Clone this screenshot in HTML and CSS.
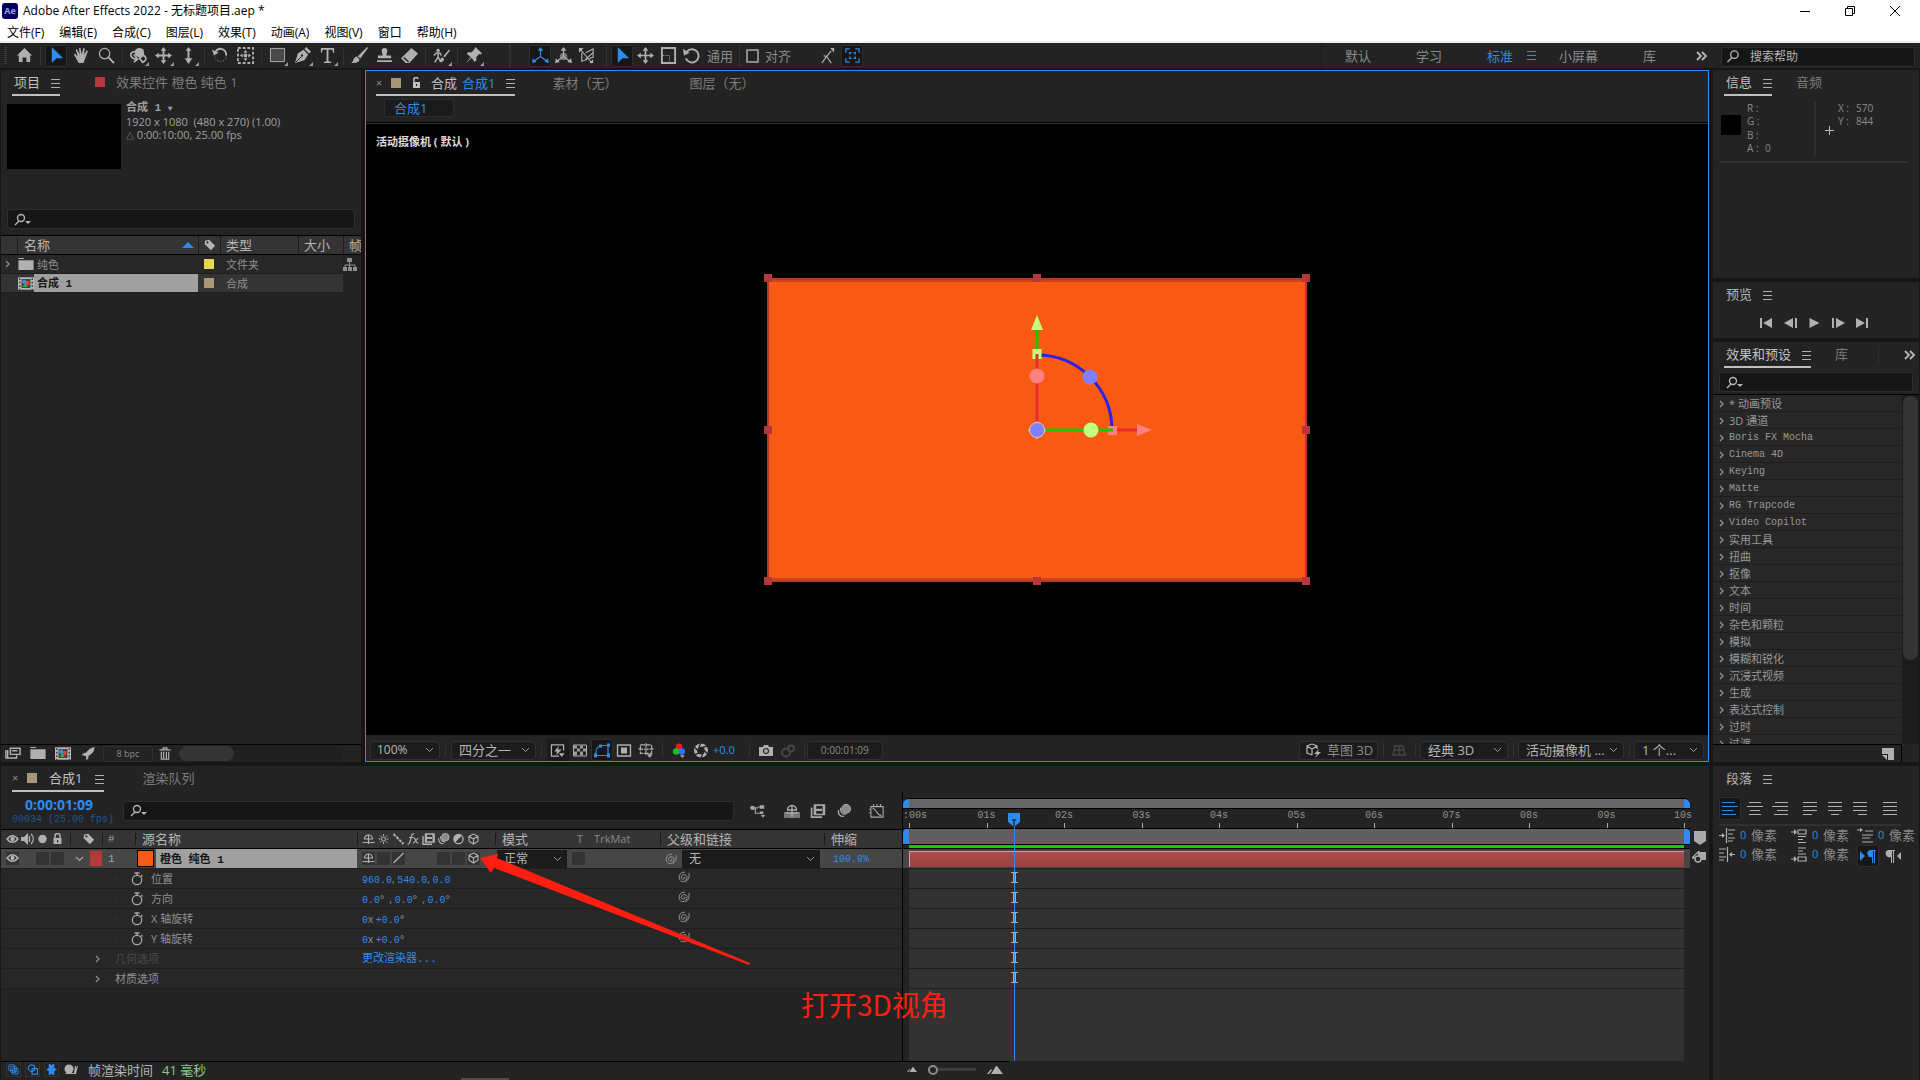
FILE: index.html
```html
<!DOCTYPE html>
<html lang="zh-CN">
<head>
    <meta charset="UTF-8">
    <meta name="viewport" content="width=device-width, initial-scale=1.0">
    <title>Adobe After Effects 2022 - 无标题项目.aep *</title>
    <link rel="stylesheet" href="styles.css">
</head>
<body>
    <!-- Icon definitions -->
    <svg class="defs" aria-hidden="true">
        <symbol id="i-home" viewBox="0 0 18 18"><path fill="currentColor" d="M9 1L1 9h2v7h4v-5h4v5h4V9h2z"/></symbol>
        <symbol id="i-cursor" viewBox="0 0 18 18"><path fill="currentColor" d="M4 0v17l5-5h7z"/></symbol>
        <symbol id="i-hand" viewBox="0 0 18 18"><path fill="currentColor" d="M6 17L1 8l1-1 3 3-2-7 1-1 3 6-.500-7h1.500l1 7 2-7 1.500.500-1 7 3-5 1.300.700L13 12l-2 5z"/></symbol>
        <symbol id="i-zoom" viewBox="0 0 18 18"><g fill="none" stroke="currentColor"><circle cx="7" cy="7" r="5.500" stroke-width="1.300"/><path d="M11 11l6 6" stroke-width="2"/></g></symbol>
        <symbol id="i-orbit" viewBox="0 0 18 18"><circle cx="10" cy="6" r="5" fill="currentColor"/><path d="M7 13C-1 12-1 5 5 5M9 9c9-2 10 6 4 7M4 8l4 5-4 3M15 8l-5 4 4 5" fill="none" stroke="currentColor" stroke-width="1.800"/></symbol>
        <symbol id="i-pan" viewBox="0 0 18 18"><path fill="currentColor" d="M9 0l3 4h-2v4h4V6l4 3-4 3v-2h-4v4h2l-3 4-3-4h2v-4H4v2L0 9l4-3v2h4V4H6z"/></symbol>
        <symbol id="i-move" viewBox="0 0 18 18"><path d="M9 2v14M2 9h14" stroke="currentColor" stroke-width="1.800"/><path fill="currentColor" d="M9 0l3 4H6zM9 18l3-4H6zM0 9l4-3v6zM18 9l-4-3v6z"/></symbol>
        <symbol id="i-dolly" viewBox="0 0 18 18"><path fill="currentColor" d="M9 0l3 4h-2v8h3l-4 6-4-6h3V4H6z"/></symbol>
        <symbol id="i-rotate" viewBox="0 0 18 18"><path d="M3 7a6 6 0 0 1 12 2" fill="none" stroke="currentColor" stroke-width="2"/><path fill="currentColor" d="M0 3l2 6 5-3z"/><path d="M15 9a6 6 0 0 1-12 1" fill="none" stroke="currentColor" stroke-dasharray="1 2"/></symbol>
        <symbol id="i-anchor" viewBox="0 0 18 18"><rect x="1" y="1" width="16" height="16" fill="none" stroke="currentColor" stroke-width="2" stroke-dasharray="3 2"/><path fill="currentColor" d="M9 3l2 3H7zM9 15l2-3H7zM3 9l3-2v4zM15 9l-3-2v4z"/><circle cx="9" cy="9" r="2" fill="currentColor"/></symbol>
        <symbol id="i-rect" viewBox="0 0 18 18"><path d="M1.500 1.500h15v14h-15z" fill="#4a4a4a" stroke="currentColor"/></symbol>
        <symbol id="i-pen" viewBox="0 0 18 18"><path fill="currentColor" d="M1 17L4 7l6-4 5 5-4 6zM11 2l2-2 5 5-2 2z"/><path d="M2 16l6-6" stroke="#232323"/><circle cx="8.500" cy="9" r="1.200" fill="#232323"/></symbol>
        <symbol id="i-type" viewBox="0 0 18 18"><path fill="currentColor" d="M2 1h14v5h-1l-1-3h-4v12l3 1v1H5v-1l3-1V3H4L3 6H2z"/></symbol>
        <symbol id="i-brush" viewBox="0 0 18 18"><path fill="currentColor" d="M17 0l1 1-8 11-3-2zM6 10l3 3c0 4-5 4-9 4 3-1 2-6 6-7z"/></symbol>
        <symbol id="i-stamp" viewBox="0 0 18 18"><path fill="currentColor" d="M6 4a3 3 0 1 1 6 0c0 2-1 3-1 5h5v3H2V9h5c0-2-1-3-1-5zM1 14h16v2H1z"/></symbol>
        <symbol id="i-eraser" viewBox="0 0 18 18"><path fill="currentColor" d="M11 1l7 6-9 10H5l-5-5z"/><path d="M3 11l5 5" stroke="#232323" stroke-width="1.500"/></symbol>
        <symbol id="i-roto" viewBox="0 0 20 18"><circle cx="6" cy="3" r="2" fill="currentColor"/><path d="M1 9l3-3h4l2 3M6 6v5l-4 6M6 11l3 5" stroke="currentColor" stroke-width="1.800" fill="none"/><path fill="currentColor" d="M19 2l1 1-6 8-2-1zM11 11l2 2c0 3-3 4-6 4 2-1 1-5 4-6z"/></symbol>
        <symbol id="i-pin" viewBox="0 0 18 18"><path fill="currentColor" d="M11 0l7 7-2 1-1-.500-3 3 0 4-2 1-3-4-6 6 5-7-4-3 1-2h4l3-3V2z"/></symbol>
        <symbol id="i-axis" viewBox="0 0 18 18"><path d="M9 3v7l-7 5M9 10l7 5" fill="none" stroke="currentColor" stroke-width="1.300"/><path fill="currentColor" d="M9 0l3 4H6zM0 17l1-5 4 4zM18 17l-1-5-4 4z"/></symbol>
        <symbol id="i-world" viewBox="0 0 18 18"><circle cx="9" cy="10" r="4" fill="#777"/><path d="M9 3v7l-7 5M9 10l7 5" fill="none" stroke="currentColor" stroke-width="1.300"/><path fill="currentColor" d="M9 0l3 4H6zM0 17l1-5 4 4zM18 17l-1-5-4 4z"/></symbol>
        <symbol id="i-view" viewBox="0 0 18 18"><path d="M4 6v9l6-2M8 6l8-4v9l-4 1M2 2l6 7 7 8M8 13l8-7" fill="none" stroke="currentColor" stroke-width="1.200"/><path fill="currentColor" d="M1 1h5L1 6zM16 17h-4l4-4z"/></symbol>
        <symbol id="i-scale" viewBox="0 0 18 18"><path d="M2 1h14v16H2z" fill="none" stroke="currentColor" stroke-width="2"/><path d="M3 9h7v7" fill="none" stroke="currentColor" stroke-dasharray="1 1"/></symbol>
        <symbol id="i-undo" viewBox="0 0 18 18"><path d="M4 5a7 7 0 1 1-1 7" fill="none" stroke="currentColor" stroke-width="2"/><path fill="currentColor" d="M0 2l1 7 6-3z"/></symbol>
        <symbol id="i-snap" viewBox="0 0 18 18"><path d="M3 17l5-7 5 7M8 10l5-6M5 9l4 2" fill="none" stroke="currentColor" stroke-width="1.300"/><path fill="currentColor" d="M12 1h4v5z"/></symbol>
        <symbol id="i-brackets" viewBox="0 0 18 18"><path d="M2 6V2h4M12 2h4v4M16 12v4h-4M6 16H2v-4M6 8V6h2M10 6h2v2M12 10v2h-2M8 12H6v-2" fill="none" stroke="currentColor" stroke-width="1.300"/></symbol>
        <symbol id="i-menu" viewBox="0 0 9 9"><path d="M0 .500h9M0 4.500h9M0 8.500h9" stroke="currentColor"/></symbol>
        <symbol id="i-more" viewBox="0 0 12 10"><path d="M1 1l4 4-4 4M6 1l4 4-4 4" fill="none" stroke="currentColor" stroke-width="2"/></symbol>
        <symbol id="i-search" viewBox="0 0 14 14"><circle cx="8.500" cy="5" r="4" fill="none" stroke="currentColor" stroke-width="1.400"/><path d="M6 8l-5 5" stroke="currentColor" stroke-width="1.500"/></symbol>
        <symbol id="i-find" viewBox="0 0 18 13"><circle cx="7" cy="5" r="3.500" fill="none" stroke="currentColor" stroke-width="1.400"/><path d="M5 8l-4 4" stroke="currentColor" stroke-width="1.500"/><path d="M11 8h6l-3 3z" fill="currentColor"/></symbol>
        <symbol id="i-tag" viewBox="0 0 14 14"><path fill="currentColor" d="M1 2l5-1 7 7-5 5-7-7z"/><circle cx="4" cy="4" r="1.300" fill="#343434"/></symbol>
        <symbol id="i-folder" viewBox="0 0 14 12"><path fill="currentColor" d="M0 0h5v1H0zM0 2h14v9H0z"/></symbol>
        <symbol id="i-comp" viewBox="0 0 18 14"><path fill="#b8b8b8" d="M0 0h18v14H0z"/><path fill="#3a3a3a" d="M4 2h10v10H4z"/><path d="M2 1v13M16 1v13" stroke="#333" stroke-width="1.500" stroke-dasharray="2 2"/><circle cx="7" cy="5" r="2.500" fill="#3b8de8"/><path fill="#e03a3a" d="M9 4h4v5H9z"/><path fill="#2cae3c" d="M8 6l3 5H5z"/></symbol>
        <symbol id="i-flow" viewBox="0 0 14 14"><path fill="currentColor" d="M4 0h5v4H4zM0 9h4v4H0zM5 9h4v4H5zM10 9h4v4h-4z"/><path d="M6.500 4v5M2 9V7h10v2" fill="none" stroke="currentColor"/></symbol>
        <symbol id="i-chev" viewBox="0 0 6 8"><path d="M1 1l3 3-3 3" fill="none" stroke="currentColor" stroke-width="1.200"/></symbol>
        <symbol id="i-down" viewBox="0 0 9 6"><path d="M1 1l3.500 3.500L8 1" fill="none" stroke="currentColor" stroke-width="1.200"/></symbol>
        <symbol id="i-interpret" viewBox="0 0 18 14"><path d="M6 1h11v7H6z" fill="none" stroke="currentColor" stroke-width="1.600"/><path d="M8 4h6M1 3v9h12V9M3 3v9" fill="none" stroke="currentColor" stroke-width="1.600"/></symbol>
        <symbol id="i-rocket" viewBox="0 0 14 14"><path fill="currentColor" d="M14 0c0 5-3 8-6 9l-1 4-2 1 0-4-4-1-1 0 2-2 3-1c2-3 5-5 9-6z"/></symbol>
        <symbol id="i-trash" viewBox="0 0 12 14"><path d="M0 3h12M4 3V1h4v2M2 5v8h8V5M4.500 5v7M7.500 5v7" fill="none" stroke="currentColor" stroke-width="1.300"/></symbol>
        <symbol id="i-lock" viewBox="0 0 10 12"><path d="M2.500 6V3a2.500 2.500 0 0 1 5 0v3" fill="none" stroke="currentColor" stroke-width="1.500"/><path fill="currentColor" d="M1 5h8v6H1z"/><path fill="#343434" d="M4.500 7h1.200v2.500H4.500z"/></symbol>
        <symbol id="i-unlock" viewBox="0 0 9 12"><path d="M2 6V3a2 2 0 0 1 4-1" fill="none" stroke="currentColor" stroke-width="1.500"/><path fill="currentColor" d="M1 5h7v6H1z"/><path fill="#232323" d="M4 7h1v2H4z"/></symbol>
        <symbol id="i-flash" viewBox="0 0 16 16"><path d="M14 8V2H1v12h8" fill="none" stroke="currentColor" stroke-width="1.300"/><path fill="currentColor" d="M9 3L4 9h3l-1 4 6-6H8zM9 11h6l-3 4z"/></symbol>
        <symbol id="i-alpha" viewBox="0 0 16 14"><path d="M1.500 1.500h13v11h-13z" fill="none" stroke="currentColor"/><path fill="#999" d="M2 2h3v3H2zM8 2h3v3H8zM5 5h3v3H5zM11 5h3v3h-3zM2 8h3v4H2zM8 8h3v4H8z"/></symbol>
        <symbol id="i-mask" viewBox="0 0 16 14"><path d="M2 12V9c0-5 3-7 7-7h5v10z" fill="none" stroke="currentColor" stroke-width="1.200"/><path fill="currentColor" d="M0 10h3v4H0zM13 10h3v4h-3zM13 0h3v3h-3zM5 1h3v3H5z"/></symbol>
        <symbol id="i-region" viewBox="0 0 16 14"><path d="M1.500 1.500h13v11h-13z" fill="none" stroke="currentColor" stroke-width="1.300"/><path fill="currentColor" d="M5 4h6v6H5z"/></symbol>
        <symbol id="i-guides" viewBox="0 0 16 16"><path d="M2 2h12v9H2zM8 0v13M0 6.500h16" fill="none" stroke="currentColor" stroke-width="1.200" stroke-dasharray="5 1"/><path fill="currentColor" d="M9 12h6l-3 4z"/></symbol>
        <symbol id="i-rgb" viewBox="0 0 14 16"><circle cx="7" cy="4" r="3.500" fill="#f01818"/><circle cx="4" cy="9" r="3.500" fill="#18c018"/><circle cx="10" cy="9" r="3.500" fill="#3c6cf8"/><path fill="#aaa" d="M8 13h5l-2.500 3z"/></symbol>
        <symbol id="i-aperture" viewBox="0 0 14 14"><circle cx="7" cy="7" r="5" fill="none" stroke="currentColor" stroke-width="3"/><path d="M7 0L5 4M13 3L8 4M13 10L9 6M7 14l2-5M1 11l5-2M1 4l4 4" stroke="#232323" stroke-width="1.200"/></symbol>
        <symbol id="i-camera" viewBox="0 0 16 13"><path fill="currentColor" d="M1 3h4l1-2h4l1 2h4v9H1z"/><circle cx="8" cy="7" r="2.500" fill="#aaa" stroke="#232323" stroke-width="1.200"/></symbol>
        <symbol id="i-ghost" viewBox="0 0 16 14"><g fill="none" stroke="currentColor" stroke-width="2"><circle cx="6" cy="9" r="4"/><circle cx="11" cy="5" r="3"/></g></symbol>
        <symbol id="i-cube" viewBox="0 0 12 12"><path d="M6 1l4.500 2.300v5L6 11 1.500 8.300v-5zM1.500 3.300L6 6l4.500-2.700M6 6v5" fill="none" stroke="currentColor" stroke-width="1.100"/></symbol>
        <symbol id="i-draft" viewBox="0 0 18 15"><path d="M7 1l5 2v3M7 1L2 3v7l5 2M2 3l5 3 5-3M7 6v6" fill="none" stroke="currentColor" stroke-width="1.300"/><path fill="currentColor" d="M14 6l-5 5h3l-2 4 6-6h-3z"/></symbol>
        <symbol id="i-grid" viewBox="0 0 14 11"><path d="M3 1h8l2 9H1zM2 5h10M7 1v9" fill="none" stroke="currentColor" stroke-width="1.300"/></symbol>
        <symbol id="i-eye" viewBox="0 0 12 10"><path d="M1 5c3-4 7-4 10 0-3 4-7 4-10 0z" fill="none" stroke="currentColor" stroke-width="1.400"/><circle cx="6" cy="5" r="2" fill="currentColor"/></symbol>
        <symbol id="i-sound" viewBox="0 0 13 12"><path fill="currentColor" d="M0 4h3l4-4v12L3 8H0z"/><path d="M8.500 3v6M10 1c3 3 3 7 0 10" fill="none" stroke="currentColor" stroke-width="1.300"/></symbol>
        <symbol id="i-dot" viewBox="0 0 8 10"><circle cx="4" cy="5" r="3.500" fill="currentColor"/></symbol>
        <symbol id="i-shy" viewBox="0 0 12 12"><path d="M2 6a4 4 0 0 1 8 0zM6 2v9M0 9.500h12" fill="none" stroke="currentColor" stroke-width="1.200"/></symbol>
        <symbol id="i-sun" viewBox="0 0 12 12"><circle cx="6" cy="6" r="2" fill="none" stroke="currentColor"/><path d="M6 1v2M6 9v2M1 6h2M9 6h2M2.500 2.500l1.500 1.500M8 8l1.500 1.500M9.500 2.500L8 4M4 8L2.500 9.500" stroke="currentColor"/></symbol>
        <symbol id="i-quality" viewBox="0 0 12 12"><path d="M1 1l10 10" stroke="currentColor" stroke-width="2" stroke-dasharray="3 1"/></symbol>
        <symbol id="i-slash" viewBox="0 0 12 12"><path d="M1 11L11 1" stroke="currentColor" stroke-width="1.500"/></symbol>
        <symbol id="i-film" viewBox="0 0 13 12"><path d="M3.500 1H12v8H3.500zM1 3v8.300h9" fill="none" stroke="currentColor" stroke-width="1.400"/><path fill="currentColor" d="M3 1h2v8H3zM10.500 1h2v8h-2zM5 4h5v2H5z"/></symbol>
        <symbol id="i-blur" viewBox="0 0 13 13"><circle cx="8.500" cy="4.500" r="4" fill="#8a8a8a" stroke="currentColor"/><path d="M3.500 3.500a4.500 4.500 0 0 0 5 6M1.500 5.500a4.500 4.500 0 0 0 5 6" fill="none" stroke="currentColor" stroke-width="1.200"/></symbol>
        <symbol id="i-adjust" viewBox="0 0 12 12"><circle cx="6" cy="6" r="4.600" fill="none" stroke="currentColor" stroke-width="1.300"/><path fill="currentColor" d="M9.300 2.700A4.600 4.600 0 0 0 2.700 9.300z"/></symbol>
        <symbol id="i-fx" viewBox="0 0 12 12"><path d="M6.500 1C4 0 4 3 3.300 6S2 11.500 0 11M1.500 4.500h4.500M6 5c2-1 2 6 5 5M11 5c-2 0-3 5-5.500 5" fill="none" stroke="currentColor" stroke-width="1.200"/></symbol>
        <symbol id="i-watch" viewBox="0 0 12 14"><circle cx="6" cy="8" r="4.700" fill="none" stroke="currentColor" stroke-width="1.300"/><path d="M3.500 1h5M6 1v3M10 3l1.500 1.500" stroke="currentColor" stroke-width="1.300"/></symbol>
        <symbol id="i-whip" viewBox="0 0 12 12"><path d="M5.500 6a1 1 0 0 1 1.500 1A2 2 0 0 1 3.200 6.500 3 3 0 0 1 9 5.500 4.300 4.300 0 0 1 2.500 10M2 9A5 5 0 0 1 7 1.200M11 2c.800 4-.500 7-3.500 9" fill="none" stroke="currentColor"/></symbol>
        <symbol id="i-tree" viewBox="0 0 18 15"><path d="M0 4h9M6 4v6h6M9 3h6" fill="none" stroke="currentColor" stroke-width="1.300"/><path fill="currentColor" d="M1 2h4v4H1zM11 1h5v4h-5zM11 8h4v3h-4zM12 12h5l-2.500 3z"/></symbol>
        <symbol id="i-shybig" viewBox="0 0 16 14"><path fill="#777" d="M0 8h16v6H0z"/><path d="M3.500 6a4.500 4.500 0 0 1 9 0zM8 1v12M2 9h12" fill="none" stroke="currentColor" stroke-width="1.400"/></symbol>
        <symbol id="i-graph" viewBox="0 0 18 16"><path d="M2 3h14v12H2zM5 0v3M9 0v3M13 0v3M0 6h2M0 10h2M4 5c5 0 4 8 10 8" fill="none" stroke="currentColor" stroke-width="1.200"/></symbol>
        <symbol id="i-first" viewBox="0 0 13 10"><path fill="currentColor" d="M0 0h2v10H0zM12 0v10L3 5z"/></symbol>
        <symbol id="i-prev" viewBox="0 0 13 10"><path fill="currentColor" d="M9 0v10L0 5zM11 0h2v10h-2z"/></symbol>
        <symbol id="i-play" viewBox="0 0 10 10"><path fill="currentColor" d="M0 0l10 5-10 5z"/></symbol>
        <symbol id="i-next" viewBox="0 0 13 10"><path fill="currentColor" d="M0 0h2v10H0zM4 0l9 5-9 5z"/></symbol>
        <symbol id="i-last" viewBox="0 0 13 10"><path fill="currentColor" d="M0 0l9 5-9 5zM10 0h2v10h-2z"/></symbol>
        <symbol id="i-page" viewBox="0 0 12 12"><path fill="currentColor" d="M0 0h12v12H6V6H0zM0 7h5v5z"/></symbol>
        <symbol id="i-left" viewBox="0 0 16 14"><path d="M0 .500h13M0 4.500h16M0 8.500h11M0 12.500h14" stroke="currentColor"/></symbol>
        <symbol id="i-center" viewBox="0 0 16 14"><path d="M2 .500h12M0 4.500h16M3 8.500h10M2 12.500h12" stroke="currentColor"/></symbol>
        <symbol id="i-right" viewBox="0 0 16 14"><path d="M3 .500h13M0 4.500h16M5 8.500h11M2 12.500h14" stroke="currentColor"/></symbol>
        <symbol id="i-jleft" viewBox="0 0 16 14"><path d="M1 .500h14M1 4.500h14M1 8.500h14M1 12.500h9" stroke="currentColor"/></symbol>
        <symbol id="i-jcenter" viewBox="0 0 16 14"><path d="M1 .500h14M1 4.500h14M1 8.500h14M4 12.500h8" stroke="currentColor"/></symbol>
        <symbol id="i-jright" viewBox="0 0 16 14"><path d="M1 .500h14M1 4.500h14M1 8.500h14M6 12.500h9" stroke="currentColor"/></symbol>
        <symbol id="i-jall" viewBox="0 0 16 14"><path d="M1 .500h14M1 4.500h14M1 8.500h14M1 12.500h14" stroke="currentColor"/></symbol>
        <symbol id="i-indl" viewBox="0 0 16 15"><path d="M7.500 0v15M9 2h7M9 6h5M9 10h7M9 13h5M0 7.500h4" stroke="currentColor" stroke-width="1.200"/><path fill="currentColor" d="M3 5l3 2.500L3 10z"/></symbol>
        <symbol id="i-indr" viewBox="0 0 16 15"><path d="M8.500 0v15M0 2h7M0 6h5M0 10h7M0 13h5M12 7.500h4" stroke="currentColor" stroke-width="1.200"/><path fill="currentColor" d="M13 5l-3 2.500 3 2.500z"/></symbol>
        <symbol id="i-before" viewBox="0 0 16 15"><path d="M7 2h8v4H7zM7 8.500h8M7 11.500h5M7 14.500h8M0 4h4" fill="none" stroke="currentColor" stroke-width="1.200"/><path fill="currentColor" d="M3 1l3 3-3 3z"/></symbol>
        <symbol id="i-after" viewBox="0 0 16 15"><path d="M7 10h8v4H7zM7 1h8M7 4h5M7 7h8M0 12h4" fill="none" stroke="currentColor" stroke-width="1.200"/><path fill="currentColor" d="M3 9l3 3-3 3z"/></symbol>
        <symbol id="i-firstline" viewBox="0 0 16 15"><path d="M8 3h8M5 7h11M5 10h8M5 14h11M0 2h3" stroke="currentColor" stroke-width="1.200"/><path fill="currentColor" d="M3 0l3 2-3 2z"/></symbol>
        <symbol id="i-ltr" viewBox="0 0 16 14"><path fill="currentColor" d="M0 2l5 5-5 5zM10 1h6v1h-1v12h-1V2h-1v12h-1V8a3.500 3.500 0 0 1-2-7z"/></symbol>
        <symbol id="i-rtl" viewBox="0 0 16 14"><path fill="currentColor" d="M16 3l-4 4 4 4zM3 1h7v1H9v12H8V2H7v12H6V8a3.500 3.500 0 0 1-3-7z"/></symbol>
        <symbol id="i-sw1" viewBox="0 0 12 12"><path d="M1 1h6v6H1zM3 3h6v6H3zM5 5h6v6H5z" fill="#1a1a1a" stroke="currentColor"/><path d="M6.500 8h3M8 6.500v3" stroke="currentColor"/></symbol>
        <symbol id="i-sw2" viewBox="0 0 12 12"><circle cx="5" cy="4.500" r="3.500" fill="none" stroke="currentColor" stroke-width="1.300"/><path d="M5.500 5h6v6h-6z" fill="none" stroke="currentColor" stroke-width="1.300"/></symbol>
        <symbol id="i-sw3" viewBox="0 0 12 12"><path fill="currentColor" d="M3 0h2v1h2V0h2v4l3 2-3 2v4H7v-1H5v1H3V8L0 6l3-2z"/></symbol>
        <symbol id="i-snail" viewBox="0 0 14 12"><circle cx="5" cy="5" r="4.500" fill="currentColor"/><path fill="currentColor" d="M1 9h9l1-7h1v3l1-3h1l-2 8H2z"/></symbol>
        <symbol id="i-hill" viewBox="0 0 16 8"><path fill="currentColor" d="M4 8l5-8h1l6 8zM0 8l4-5 1 1-3 4z"/></symbol>
    </svg>

    <div class="app">
        <header class="titlebar">
            <svg class="logo" viewBox="0 0 16 16"><rect width="16" height="16" rx="3" fill="#00005b"/><text x="8" y="11" text-anchor="middle">Ae</text></svg>
            <h1>Adobe After Effects 2022 - 无标题项目.aep *</h1>
            <div class="window-buttons">
                <button aria-label="最小化"><svg viewBox="0 0 10 10"><path d="M0 5.500h10"/></svg></button>
                <button aria-label="还原"><svg viewBox="0 0 10 10"><path d="M.500 2.500h7v7h-7zM2.500 2V.500h7v7H8"/></svg></button>
                <button aria-label="关闭"><svg viewBox="0 0 10 10"><path d="M0 0l10 10M10 0L0 10"/></svg></button>
            </div>
        </header>
        <nav class="menubar">
            <button>文件(F)</button><button>编辑(E)</button><button>合成(C)</button><button>图层(L)</button><button>效果(T)</button><button>动画(A)</button><button>视图(V)</button><button>窗口</button><button>帮助(H)</button>
        </nav>

        <div class="toolbar">
            <span class="grip"></span>
            <div class="tools">
                <button class="tool" aria-label="主页"><svg><use href="#i-home"/></svg></button>
                <i class="sep"></i>
                <button class="tool active" aria-label="选取"><svg><use href="#i-cursor"/></svg></button>
                <button class="tool" aria-label="手形"><svg><use href="#i-hand"/></svg></button>
                <button class="tool" aria-label="缩放"><svg><use href="#i-zoom"/></svg></button>
                <i class="sep"></i>
                <button class="tool more" aria-label="绕光标旋转"><svg><use href="#i-orbit"/></svg></button>
                <button class="tool more" aria-label="平移"><svg><use href="#i-pan"/></svg></button>
                <button class="tool more" aria-label="推拉"><svg><use href="#i-dolly"/></svg></button>
                <i class="sep"></i>
                <button class="tool" aria-label="旋转"><svg><use href="#i-rotate"/></svg></button>
                <button class="tool" aria-label="锚点"><svg><use href="#i-anchor"/></svg></button>
                <i class="sep"></i>
                <button class="tool more" aria-label="矩形"><svg><use href="#i-rect"/></svg></button>
                <button class="tool more" aria-label="钢笔"><svg><use href="#i-pen"/></svg></button>
                <button class="tool more" aria-label="文字"><svg><use href="#i-type"/></svg></button>
                <i class="sep"></i>
                <button class="tool" aria-label="画笔"><svg><use href="#i-brush"/></svg></button>
                <button class="tool" aria-label="仿制图章"><svg><use href="#i-stamp"/></svg></button>
                <button class="tool" aria-label="橡皮擦"><svg><use href="#i-eraser"/></svg></button>
                <i class="sep"></i>
                <button class="tool more" aria-label="Roto 笔刷"><svg><use href="#i-roto"/></svg></button>
                <i class="sep"></i>
                <button class="tool more" aria-label="操控点"><svg><use href="#i-pin"/></svg></button>
            </div>
            <div class="tools axis-tools">
                <button class="tool active" aria-label="本地轴"><svg><use href="#i-axis"/></svg></button>
                <button class="tool" aria-label="世界轴"><svg><use href="#i-world"/></svg></button>
                <button class="tool" aria-label="视图轴"><svg><use href="#i-view"/></svg></button>
            </div>
            <div class="tools gizmo-tools">
                <button class="tool active" aria-label="通用"><svg><use href="#i-cursor"/></svg></button>
                <button class="tool" aria-label="位置"><svg><use href="#i-move"/></svg></button>
                <button class="tool" aria-label="缩放"><svg><use href="#i-scale"/></svg></button>
                <button class="tool" aria-label="旋转"><svg><use href="#i-undo"/></svg></button>
                <span>通用</span>
            </div>
            <div class="tools snap-tools">
                <label class="snap"><input type="checkbox">对齐</label>
                <button class="tool" aria-label="边缘对齐"><svg><use href="#i-snap"/></svg></button>
                <button class="tool active" aria-label="特性对齐"><svg><use href="#i-brackets"/></svg></button>
            </div>
            <nav class="workspaces">
                <button>默认</button>
                <button>学习</button>
                <button class="current">标准<svg><use href="#i-menu"/></svg></button>
                <button>小屏幕</button>
                <button>库</button>
                <button class="all" aria-label="更多"><svg><use href="#i-more"/></svg></button>
            </nav>
            <label class="search help-search"><svg><use href="#i-search"/></svg><input type="text" placeholder="搜索帮助" aria-label="搜索帮助"></label>
        </div>

        <div class="workspace">
            <main class="main">
                <div class="upper">
                    <!-- Project panel -->
                    <section class="panel project">
                        <div class="tabs">
                            <button class="tab active">项目<svg class="menu"><use href="#i-menu"/></svg></button>
                            <button class="tab"><i class="swatch red"></i>效果控件 橙色 纯色 1</button>
                        </div>
                        <div class="item-info">
                            <div class="thumb"></div>
                            <div class="item-text">
                                <strong>合成 1 <small>▼</small></strong>
                                <p>1920 x 1080&nbsp; (480 x 270) (1.00)</p>
                                <p><small>△</small> 0:00:10:00, 25.00 fps</p>
                            </div>
                        </div>
                        <label class="search"><svg><use href="#i-find"/></svg><input type="text" aria-label="搜索项目"></label>
                        <table class="items">
                            <colgroup><col class="c-name"><col class="c-tag"><col class="c-type"><col class="c-size"><col></colgroup>
                            <thead>
                                <tr>
                                    <th class="name-head"><span>名称<svg class="sort" viewBox="0 0 12 6"><path d="M0 6l6-6 6 6z" fill="#2d8ceb"/></svg></span></th>
                                    <th><svg class="tag"><use href="#i-tag"/></svg></th>
                                    <th>类型</th>
                                    <th>大小</th>
                                    <th>帧</th>
                                </tr>
                            </thead>
                            <tbody>
                                <tr>
                                    <td><div class="item"><svg class="chev"><use href="#i-chev"/></svg><svg class="file"><use href="#i-folder"/></svg><span>纯色</span></div></td>
                                    <td class="mid"><i class="swatch yellow"></i></td>
                                    <td>文件夹</td><td></td>
                                    <td class="flow"><svg><use href="#i-flow"/></svg></td>
                                </tr>
                                <tr class="selected">
                                    <td><div class="item"><i class="chev"></i><svg class="file"><use href="#i-comp"/></svg><span>合成 1</span></div></td>
                                    <td class="mid"><i class="swatch tan"></i></td>
                                    <td>合成</td><td></td><td class="flow"></td>
                                </tr>
                            </tbody>
                        </table>
                        <div class="project-footer">
                            <button aria-label="解释素材"><svg><use href="#i-interpret"/></svg></button>
                            <button aria-label="新建文件夹"><svg><use href="#i-folder"/></svg></button>
                            <button aria-label="新建合成"><svg><use href="#i-comp"/></svg></button>
                            <button aria-label="项目设置"><svg><use href="#i-rocket"/></svg></button>
                            <button class="bpc">8 bpc</button>
                            <button aria-label="删除"><svg><use href="#i-trash"/></svg></button>
                            <div class="hscroll"><i></i></div>
                        </div>
                    </section>

                    <!-- Composition viewer -->
                    <section class="panel viewer">
                        <div class="tabs">
                            <button class="tab active"><span class="close">×</span><i class="swatch tan"></i><svg class="lock"><use href="#i-unlock"/></svg>合成 <em>合成1</em><svg class="menu"><use href="#i-menu"/></svg></button>
                            <button class="tab">素材（无）</button>
                            <button class="tab layer-tab">图层（无）</button>
                        </div>
                        <div class="crumbs"><button>合成1</button></div>
                        <div class="stage">
                            <span class="view-name">活动摄像机 ( 默认 )</span>
                            <svg class="canvas" viewBox="-280 -162 560 324">
                                <path d="M-269-151h538v302h-538z" fill="#f85a14" stroke="#b5383a" stroke-width="2"/>
                                <path d="M-268-149h536M-268 149h536" stroke="#c94814" stroke-width="2"/>
                                <g fill="#b5383a">
                                    <path d="M-273-156h8v8h-8zM-4-156h8v8h-8zM265-156h8v8h-8zM-273-4h8v8h-8zM265-4h8v8h-8zM-273 147h8v8h-8zM-4 147h8v8h-8zM265 147h8v8h-8z"/>
                                </g>
                                <path d="M0-75A75 75 0 0 1 75 0" fill="none" stroke="#2d22e6" stroke-width="3"/>
                                <path d="M0-100v24" stroke="#1fc400" stroke-width="3"/>
                                <path d="M0-115l6 15H-6z" fill="#c3ff7f"/>
                                <path d="M-4.500-81h9v10h-9z" fill="#c3ff7f"/>
                                <path d="M0-76V0" stroke="#e62d2d" stroke-width="3"/>
                                <circle cy="-54" r="7.500" fill="#ff8080"/>
                                <path d="M71-4h9v9h-9z" fill="#ff8080"/>
                                <path d="M80 0h20" stroke="#e62d2d" stroke-width="3"/>
                                <path d="M100-6l15 6-15 6z" fill="#ff8080"/>
                                <path d="M0 0h76" stroke="#1fc400" stroke-width="3"/>
                                <circle cx="54" r="7.500" fill="#c3ff7f"/>
                                <circle cx="53" cy="-53" r="7.500" fill="#8080ff"/>
                                <path d="M-9 0l9-9 9 9-9 9z" fill="#ccc"/>
                                <circle r="7.500" fill="#8080ff" stroke="#ccc"/>
                            </svg>
                        </div>
                        <div class="viewer-bar">
                            <select class="w-zoom" aria-label="放大率"><option>100%</option></select>
                            <i class="sep"></i>
                            <select class="w-res" aria-label="分辨率"><option>四分之一</option></select>
                            <i class="sep"></i>
                            <button class="tool dark" aria-label="快速预览"><svg><use href="#i-flash"/></svg></button>
                            <button class="tool" aria-label="透明网格"><svg><use href="#i-alpha"/></svg></button>
                            <button class="tool active" aria-label="蒙版"><svg><use href="#i-mask"/></svg></button>
                            <button class="tool" aria-label="目标区域"><svg><use href="#i-region"/></svg></button>
                            <button class="tool" aria-label="参考线"><svg><use href="#i-guides"/></svg></button>
                            <i class="sep"></i>
                            <button class="tool" aria-label="通道"><svg><use href="#i-rgb"/></svg></button>
                            <button class="tool" aria-label="重置曝光"><svg><use href="#i-aperture"/></svg></button>
                            <button class="exposure">+0.0</button>
                            <i class="sep"></i>
                            <button class="tool" aria-label="快照"><svg><use href="#i-camera"/></svg></button>
                            <button class="tool off" aria-label="显示快照"><svg><use href="#i-ghost"/></svg></button>
                            <i class="sep"></i>
                            <button class="boxed time">0:00:01:09</button>
                            <div class="bar-right">
                                <button class="boxed draft"><svg><use href="#i-draft"/></svg>草图 3D</button>
                                <i class="sep"></i>
                                <button class="tool off" aria-label="地平面"><svg><use href="#i-grid"/></svg></button>
                                <i class="sep"></i>
                                <select class="w-3d" aria-label="渲染器"><option>经典 3D</option></select>
                                <i class="sep"></i>
                                <select class="w-cam" aria-label="视图"><option>活动摄像机 ...</option></select>
                                <i class="sep"></i>
                                <select class="w-views" aria-label="视图布局"><option>1 个...</option></select>
                            </div>
                        </div>
                    </section>
                </div>

                <!-- Timeline -->
                <section class="panel timeline">
                    <div class="tabs">
                        <button class="tab active"><span class="close">×</span><i class="swatch tan"></i>合成1<svg class="menu"><use href="#i-menu"/></svg></button>
                        <button class="tab">渲染队列</button>
                    </div>
                    <div class="timeline-body">
                        <div class="outline">
                            <div class="outline-top">
                                <div class="timecode"><strong>0:00:01:09</strong><span>00034 (25.00 fps)</span></div>
                                <label class="search"><svg><use href="#i-find"/></svg><input type="text" aria-label="搜索图层"></label>
                                <button aria-label="合成微型流程图"><svg><use href="#i-tree"/></svg></button>
                                <button aria-label="消隐"><svg><use href="#i-shybig"/></svg></button>
                                <button aria-label="帧混合"><svg><use href="#i-film"/></svg></button>
                                <button aria-label="运动模糊"><svg><use href="#i-blur"/></svg></button>
                                <button class="graph-btn" aria-label="图表编辑器"><svg><use href="#i-graph"/></svg></button>
                            </div>
                            <table class="layers">
                                <colgroup><col class="l-av"><col class="l-label"><col class="l-num"><col class="l-name"><col class="l-switch"><col class="l-mode"><col class="l-parent"><col class="l-stretch"></colgroup>
                                <thead>
                                    <tr>
                                        <th><div class="cells av"><svg><use href="#i-eye"/></svg><svg><use href="#i-sound"/></svg><svg><use href="#i-dot"/></svg><svg><use href="#i-lock"/></svg></div></th>
                                        <th><svg class="tag"><use href="#i-tag"/></svg></th>
                                        <th class="num">#</th>
                                        <th>源名称</th>
                                        <th><div class="cells"><svg><use href="#i-shy"/></svg><svg><use href="#i-sun"/></svg><svg><use href="#i-quality"/></svg><svg><use href="#i-fx"/></svg><svg><use href="#i-film"/></svg><svg><use href="#i-blur"/></svg><svg><use href="#i-adjust"/></svg><svg><use href="#i-cube"/></svg></div></th>
                                        <th><div class="mode-head">模式<span>T</span><span>TrkMat</span></div></th>
                                        <th>父级和链接</th>
                                        <th>伸缩</th>
                                    </tr>
                                </thead>
                                <tbody>
                                    <tr class="layer">
                                        <td><div class="cells av"><span class="box"><svg><use href="#i-eye"/></svg></span><span></span><span class="box"></span><span class="box"></span></div></td>
                                        <td><div class="label"><svg><use href="#i-down"/></svg><i></i></div></td>
                                        <td class="num">1</td>
                                        <td class="layer-name"><div><i></i><span>橙色 纯色 1</span></div></td>
                                        <td><div class="cells"><span class="box"><svg><use href="#i-shy"/></svg></span><span class="box"></span><span class="box"><svg><use href="#i-slash"/></svg></span><span></span><span></span><span class="box"></span><span class="box"></span><span class="box"><svg><use href="#i-cube"/></svg></span></div></td>
                                        <td class="flush"><div class="mode"><select aria-label="模式"><option>正常</option></select><span class="box"></span></div></td>
                                        <td class="flush"><div class="parent"><svg><use href="#i-whip"/></svg><select aria-label="父级"><option>无</option></select></div></td>
                                        <td class="value">100.0%</td>
                                    </tr>
                                    <tr>
                                        <td colspan="4"><div class="prop"><i>·</i><svg><use href="#i-watch"/></svg>位置</div></td>
                                        <td class="value" colspan="2">960.0<b>, </b>540.0<b>, </b>0.0</td>
                                        <td class="whip" colspan="2"><svg><use href="#i-whip"/></svg></td>
                                    </tr>
                                    <tr>
                                        <td colspan="4"><div class="prop"><i>·</i><svg><use href="#i-watch"/></svg>方向</div></td>
                                        <td class="value" colspan="2">0.0<b>° &nbsp;, </b>0.0<b>° &nbsp;, </b>0.0<b>°</b></td>
                                        <td class="whip" colspan="2"><svg><use href="#i-whip"/></svg></td>
                                    </tr>
                                    <tr>
                                        <td colspan="4"><div class="prop"><i>·</i><svg><use href="#i-watch"/></svg>X 轴旋转</div></td>
                                        <td class="value" colspan="2">0<b>x </b>+0.0<b>°</b></td>
                                        <td class="whip" colspan="2"><svg><use href="#i-whip"/></svg></td>
                                    </tr>
                                    <tr>
                                        <td colspan="4"><div class="prop"><i>·</i><svg><use href="#i-watch"/></svg>Y 轴旋转</div></td>
                                        <td class="value" colspan="2">0<b>x </b>+0.0<b>°</b></td>
                                        <td class="whip" colspan="2"><svg><use href="#i-whip"/></svg></td>
                                    </tr>
                                    <tr>
                                        <td colspan="4"><div class="group disabled"><svg><use href="#i-chev"/></svg>几何选项</div></td>
                                        <td class="value" colspan="4"><a href="#">更改渲染器...</a></td>
                                    </tr>
                                    <tr>
                                        <td colspan="4"><div class="group"><svg><use href="#i-chev"/></svg>材质选项</div></td>
                                        <td colspan="4"></td>
                                    </tr>
                                </tbody>
                            </table>
                        </div>
                        <div class="graph">
                            <div class="navigator"><i></i></div>
                            <div class="ruler">
                                <span>:00s</span><span>01s</span><span>02s</span><span>03s</span><span>04s</span><span>05s</span><span>06s</span><span>07s</span><span>08s</span><span>09s</span><span class="end">10s</span>
                            </div>
                            <div class="workarea"><i></i></div>
                            <div class="cached"></div>
                            <div class="tracks">
                                <div class="track layer-track"><div class="bar"></div></div>
                                <div class="track"></div><div class="track"></div><div class="track"></div><div class="track"></div><div class="track"></div><div class="track"></div>
                                <div class="playhead">
                                    <svg viewBox="0 0 12 14"><path d="M0 0h12v9l-6 5-6-5z" fill="#2d8ceb"/><path d="M4 7h4M6 7v7" stroke="#111"/></svg>
                                    <i></i><i></i><i></i><i></i><i></i><i></i>
                                </div>
                            </div>
                        </div>
                        <div class="gutter">
                            <svg viewBox="0 0 12 14"><path d="M0 0h12v10l-6 4-6-4z" fill="#aaa"/></svg>
                            <svg viewBox="0 0 14 12"><path d="M5 1h9v8H8z" fill="#aaa"/><circle cx="6" cy="8" r="3" fill="#232323" stroke="#aaa" stroke-width="1.500"/><path d="M0 7l7-7v5M0 7h3" stroke="#aaa" fill="none" stroke-width="1.300"/></svg>
                        </div>
                    </div>
                    <div class="timeline-footer">
                        <div class="status">
                            <button class="switch" aria-label="图层开关"><svg><use href="#i-sw1"/></svg></button>
                            <button class="switch" aria-label="转换控制"><svg><use href="#i-sw2"/></svg></button>
                            <button class="switch" aria-label="入点出点"><svg><use href="#i-sw3"/></svg></button>
                            <svg class="snail"><use href="#i-snail"/></svg>
                            <span>帧渲染时间</span><span class="ms">41 毫秒</span>
                        </div>
                        <div class="zoom">
                            <svg class="small"><use href="#i-hill"/></svg>
                            <input type="range" min="0" max="100" value="0" aria-label="时间缩放">
                            <svg><use href="#i-hill"/></svg>
                        </div>
                    </div>
                    <svg class="arrow" viewBox="0 0 270 112"><path d="M0 4l18-4-1 4 253 105-1 2-255-97-3 5z" fill="#ff1e10"/></svg>
                    <span class="note">打开3D视角</span>
                    <span class="drag-handle"></span>
                </section>
            </main>

            <aside class="side">
                <section class="panel info">
                    <div class="tabs">
                        <button class="tab active">信息<svg class="menu"><use href="#i-menu"/></svg></button>
                        <button class="tab">音频</button>
                    </div>
                    <div class="readout">
                        <i class="chip"></i>
                        <dl><dt>R :</dt><dd></dd><dt>G :</dt><dd></dd><dt>B :</dt><dd></dd><dt>A :</dt><dd>0</dd></dl>
                        <svg viewBox="0 0 9 9"><path d="M4.500 0v9M0 4.500h9" stroke="#bbb"/></svg>
                        <dl class="xy"><dt>X :</dt><dd>570</dd><dt>Y :</dt><dd>844</dd></dl>
                    </div>
                </section>

                <section class="panel preview">
                    <div class="tabs"><button class="tab single">预览<svg class="menu"><use href="#i-menu"/></svg></button></div>
                    <div class="transport">
                        <button aria-label="第一帧"><svg><use href="#i-first"/></svg></button>
                        <button aria-label="上一帧"><svg><use href="#i-prev"/></svg></button>
                        <button aria-label="播放"><svg><use href="#i-play"/></svg></button>
                        <button aria-label="下一帧"><svg><use href="#i-next"/></svg></button>
                        <button aria-label="最后一帧"><svg><use href="#i-last"/></svg></button>
                    </div>
                </section>

                <section class="panel effects">
                    <div class="tabs">
                        <button class="tab active">效果和预设<svg class="menu"><use href="#i-menu"/></svg></button>
                        <button class="tab">库</button>
                        <button class="overflow" aria-label="更多"><svg><use href="#i-more"/></svg></button>
                    </div>
                    <label class="search"><svg><use href="#i-find"/></svg><input type="text" aria-label="搜索效果"></label>
                    <div class="effects-body">
                        <ul>
                            <li><svg><use href="#i-chev"/></svg>* 动画预设</li>
                            <li><svg><use href="#i-chev"/></svg>3D 通道</li>
                            <li class="latin"><svg><use href="#i-chev"/></svg>Boris FX Mocha</li>
                            <li class="latin"><svg><use href="#i-chev"/></svg>Cinema 4D</li>
                            <li class="latin"><svg><use href="#i-chev"/></svg>Keying</li>
                            <li class="latin"><svg><use href="#i-chev"/></svg>Matte</li>
                            <li class="latin"><svg><use href="#i-chev"/></svg>RG Trapcode</li>
                            <li class="latin"><svg><use href="#i-chev"/></svg>Video Copilot</li>
                            <li><svg><use href="#i-chev"/></svg>实用工具</li>
                            <li><svg><use href="#i-chev"/></svg>扭曲</li>
                            <li><svg><use href="#i-chev"/></svg>抠像</li>
                            <li><svg><use href="#i-chev"/></svg>文本</li>
                            <li><svg><use href="#i-chev"/></svg>时间</li>
                            <li><svg><use href="#i-chev"/></svg>杂色和颗粒</li>
                            <li><svg><use href="#i-chev"/></svg>模拟</li>
                            <li><svg><use href="#i-chev"/></svg>模糊和锐化</li>
                            <li><svg><use href="#i-chev"/></svg>沉浸式视频</li>
                            <li><svg><use href="#i-chev"/></svg>生成</li>
                            <li><svg><use href="#i-chev"/></svg>表达式控制</li>
                            <li><svg><use href="#i-chev"/></svg>过时</li>
                            <li><svg><use href="#i-chev"/></svg>过渡</li>
                        </ul>
                        <div class="vscroll"><i></i></div>
                    </div>
                    <div class="effects-footer"><button aria-label="新建动画预设"><svg><use href="#i-page"/></svg></button></div>
                </section>

                <section class="panel paragraph">
                    <div class="tabs"><button class="tab single">段落<svg class="menu"><use href="#i-menu"/></svg></button></div>
                    <div class="aligns">
                        <button class="tool active" aria-label="左对齐"><svg><use href="#i-left"/></svg></button>
                        <button class="tool" aria-label="居中对齐"><svg><use href="#i-center"/></svg></button>
                        <button class="tool" aria-label="右对齐"><svg><use href="#i-right"/></svg></button>
                        <button class="tool gap" aria-label="末行左对齐"><svg><use href="#i-jleft"/></svg></button>
                        <button class="tool" aria-label="末行居中"><svg><use href="#i-jcenter"/></svg></button>
                        <button class="tool" aria-label="末行右对齐"><svg><use href="#i-jright"/></svg></button>
                        <button class="tool gap" aria-label="全部对齐"><svg><use href="#i-jall"/></svg></button>
                    </div>
                    <div class="indents">
                        <label><svg><use href="#i-indl"/></svg><input type="text" value="0">像素</label>
                        <label><svg><use href="#i-before"/></svg><input type="text" value="0">像素</label>
                        <label><svg><use href="#i-firstline"/></svg><input type="text" value="0">像素</label>
                        <label><svg><use href="#i-indr"/></svg><input type="text" value="0">像素</label>
                        <label><svg><use href="#i-after"/></svg><input type="text" value="0">像素</label>
                        <div class="direction">
                            <button class="tool active" aria-label="从左到右"><svg><use href="#i-ltr"/></svg></button>
                            <button class="tool" aria-label="从右到左"><svg><use href="#i-rtl"/></svg></button>
                        </div>
                    </div>
                </section>
            </aside>
        </div>
    </div>
</body>
</html>
```

FILE: styles.css
```css
* {
    box-sizing: border-box;
}

body {
    margin: 0;
    background-color: #161616;
    color: #b4b4b4;
    font-family: "Open Sans", "Noto Sans CJK SC", sans-serif;
    font-size: 13px;
    line-height: 16px;
}

button, input, select {
    font: inherit;
    color: inherit;
    background: none;
    border: none;
    padding: 0;
    margin: 0;
}

button {
    cursor: pointer;
    white-space: nowrap;
}

input {
    min-width: 0;
    outline: none;
}

svg {
    display: block;
    flex: none;
    width: 12px;
    height: 12px;
}

p, h1, dl, dd, ul {
    margin: 0;
    padding: 0;
}

.defs {
    position: absolute;
    width: 0;
    height: 0;
}

.app {
    display: flex;
    flex-direction: column;
    height: 100vh;
    overflow: hidden;
}

/* Window chrome */
.titlebar {
    display: flex;
    align-items: center;
    height: 22px;
    padding-left: 2px;
    background-color: #fff;
    color: #000;
}

.titlebar h1 {
    margin-left: 5px;
    font-size: 12px;
    font-weight: normal;
}

.logo {
    width: 16px;
    height: 16px;
}

.logo text {
    fill: #9999ff;
    font-size: 9px;
    font-weight: bold;
}

.window-buttons {
    display: flex;
    margin-left: auto;
    padding-right: 2px;
}

.window-buttons button {
    width: 45px;
    padding: 0 17px;
}

.window-buttons svg {
    width: 10px;
    height: 10px;
    fill: none;
    stroke: #000;
}

.menubar {
    display: flex;
    gap: 15px;
    height: 21px;
    padding: 2px 0 0 7px;
    background-color: #fff;
    border-bottom: 2px solid #eef2f0;
    color: #000;
    font-size: 12px;
}

/* Toolbar */
.toolbar {
    display: flex;
    align-items: center;
    flex: none;
    height: 25px;
    background-color: #232323;
    color: #8a8a8a;
}

.grip {
    width: 3px;
    height: 18px;
    margin: 0 6px 0 4px;
    background: repeating-linear-gradient(#3c3c3c 0 1px, #232323 1px 2px);
}

.tools {
    display: flex;
    align-items: center;
    gap: 3px;
}

.tool {
    display: flex;
    align-items: center;
    justify-content: center;
    position: relative;
    width: 22px;
    height: 22px;
    color: #b0b0b0;
}

.tool svg {
    width: 17px;
    height: 17px;
}

.tool.active {
    background-color: #161616;
    outline: 1px solid #2e2e2e;
    outline-offset: -1px;
    border-radius: 2px;
    color: #2d8ceb;
}

.tool.dark {
    background-color: #1b1b1b;
}

.tool.off {
    color: #454545;
}

.tool.more::after {
    content: "";
    position: absolute;
    right: 0;
    bottom: 1px;
    border: 2px solid transparent;
    border-right-color: #999;
    border-bottom-color: #999;
}

.sep {
    flex: none;
    width: 1px;
    height: 18px;
    margin: 0 1px 0 2px;
    background-color: #333;
}

.axis-tools {
    gap: 1px;
    margin-left: 25px;
    padding-left: 18px;
    border-left: 2px solid #303030;
    height: 25px;
}

.gizmo-tools {
    gap: 1px;
    margin-left: 9px;
    padding-left: 4px;
    border-left: 1px solid #333;
}

.gizmo-tools span {
    margin-left: 4px;
}

.snap-tools {
    margin-left: 6px;
    padding-left: 6px;
    border-left: 1px solid #333;
}

.snap {
    display: flex;
    align-items: center;
    gap: 6px;
    margin-right: 22px;
}

.snap input {
    appearance: none;
    width: 13px;
    height: 14px;
    border: 2px solid #8a8a8a;
    border-radius: 1px;
}

.workspaces {
    display: flex;
    align-items: center;
    gap: 45px;
    margin-left: auto;
    height: 25px;
    padding: 0 9px 0 23px;
    border-left: 1px solid #1a1a1a;
}

.workspaces .current {
    display: flex;
    align-items: center;
    gap: 14px;
    margin-right: -22px;
    color: #2d8ceb;
}

.workspaces .current svg {
    width: 9px;
    height: 9px;
}

.workspaces .all {
    margin-left: -5px;
    color: #b0b0b0;
}

.search {
    display: flex;
    align-items: center;
    height: 20px;
    padding: 0 6px;
    background-color: #161616;
    border: 1px solid #2e2e2e;
    border-radius: 3px;
    color: #b4b4b4;
}

.search svg {
    width: 18px;
    height: 13px;
}

.search input {
    flex: 1;
    margin-left: 6px;
}

.search input::placeholder {
    color: #b4b4b4;
}

.help-search {
    width: 194px;
    margin: 2px 5px 0 4px;
    padding: 0 2px;
    font-size: 12px;
}

.help-search input {
    margin-left: 8px;
}

/* Panels */
.workspace {
    display: grid;
    grid-template-columns: minmax(0, 1fr) 206px;
    gap: 4px;
    flex: 1;
    min-height: 0;
    padding: 2px 1px 0 1px;
}

.main {
    display: grid;
    grid-template-rows: minmax(0, 1fr) 314px;
    gap: 4px;
    min-height: 0;
}

.upper {
    display: grid;
    grid-template-columns: 360px minmax(0, 1fr);
    gap: 4px;
    min-height: 0;
}

.side {
    display: grid;
    grid-template-rows: 208px 56px minmax(0, 1fr) 314px;
    gap: 4px;
    min-height: 0;
}

.panel {
    display: flex;
    flex-direction: column;
    min-width: 0;
    background-color: #232323;
}

.tabs {
    display: flex;
    flex: none;
    height: 26px;
    padding-left: 11px;
    gap: 22px;
}

.tab {
    display: flex;
    align-items: center;
    padding: 0 0 0 2px;
    border-bottom: 2px solid transparent;
    color: #7c7c7c;
}

.tab.active {
    border-bottom-color: #c0c0c0;
    color: #c0c0c0;
}

.tab.single {
    color: #b4b4b4;
}

.tab em {
    margin-left: 5px;
    font-style: normal;
    color: #2d8ceb;
}

.menu {
    width: 9px;
    height: 9px;
    margin-left: 11px;
    margin-top: 2px;
    color: #b0b0b0;
}

.close {
    width: 15px;
    text-align: left;
    color: #8a8a8a;
    font-size: 11px;
}

.swatch {
    display: inline-block;
    width: 10px;
    height: 10px;
}

.swatch.red {
    margin-right: 11px;
    background-color: #b5383a;
}

.swatch.tan {
    background-color: #a99778;
}

.swatch.yellow {
    background-color: #e4d84d;
}

/* Project panel */
.project .tabs {
    gap: 33px;
}

.item-info {
    display: flex;
    gap: 5px;
    height: 113px;
    padding: 8px 6px;
}

.thumb {
    width: 114px;
    height: 65px;
    background-color: #000;
}

.item-text {
    margin-top: -2px;
    font-size: 11px;
    line-height: 13px;
    color: #a0a0a0;
}

.item-text strong {
    display: block;
    height: 13px;
    font-family: "Liberation Mono", "Noto Sans CJK SC", monospace;
}

.item-text p {
    height: 13px;
}

.item-text small {
    font-size: 8px;
}

.project .search {
    margin: 0 6px;
}

.items {
    width: 100%;
    margin-top: 6px;
    table-layout: fixed;
    border-collapse: separate;
    border-spacing: 0;
}

.c-name { width: 197px; }
.c-tag { width: 22px; }
.c-type { width: 78px; }
.c-size { width: 45px; }

.items th {
    height: 20px;
    padding: 0 0 0 6px;
    background-color: #343434;
    border-top: 1px solid #000;
    border-bottom: 1px solid #000;
    font-weight: normal;
    text-align: left;
    white-space: nowrap;
    overflow: hidden;
    line-height: 16px;
    box-shadow: inset 1px 0 #1c1c1c;
}

.items .name-head {
    padding-left: 16px;
    box-shadow: none;
}

.name-head span {
    display: flex;
    align-items: center;
    padding: 0 4px 0 6px;
    border-left: 1px solid #1c1c1c;
}

.sort {
    width: 12px;
    height: 6px;
    margin-left: auto;
}

.items td {
    height: 19px;
    padding: 2px 0 0 6px;
    border-bottom: 1px solid #1e1e1e;
    background-color: #272727;
    color: #909090;
    font-size: 11px;
    line-height: 14px;
}

.items td:first-child {
    padding: 0;
}

.items td.mid {
    padding: 4px 0 4px 6px;
    line-height: 10px;
}

.items .mid .swatch {
    display: block;
}

.items .selected td {
    background-color: #343434;
}

.items td.flow {
    padding: 1px 0 0;
    border: none;
    background-color: #232323;
}

.items .flow svg {
    width: 14px;
    height: 14px;
}

.item {
    display: flex;
    align-items: center;
    height: 18px;
}

.item .chev {
    width: 6px;
    height: 8px;
    margin: 0 7px 0 4px;
}

.item .file {
    width: 16px;
    height: 13px;
    color: #b0b0b0;
}

.item span {
    flex: 1;
    height: 18px;
    padding: 2px 0 0 3px;
    line-height: 16px;
}

.selected .item span {
    background-color: #a0a0a0;
    color: #161616;
    font-family: "Liberation Mono", "Noto Sans CJK SC", monospace;
    font-weight: bold;
}

.project-footer {
    display: flex;
    align-items: center;
    gap: 9px;
    height: 18px;
    margin-top: auto;
    padding-left: 4px;
    border-top: 1px solid #000;
    color: #b0b0b0;
}

.project-footer svg {
    width: 16px;
    height: 13px;
}

.project-footer .bpc {
    width: 50px;
    height: 16px;
    margin: 0 -5px 0 -2px;
    border: 1px solid #2e2e2e;
    border-radius: 2px;
    font-size: 9px;
    line-height: 14px;
    color: #8a8a8a;
}

.hscroll {
    flex: 1;
    margin-right: 18px;
    margin-left: -3px;
    background-color: #1f1f1f;
}

.hscroll i {
    display: block;
    width: 55px;
    height: 15px;
    border-radius: 8px;
    background-color: #343434;
}

/* Composition viewer */
.viewer {
    border: 1px solid #2d8ceb;
}

.viewer .tabs {
    height: 25px;
    gap: 35px;
    padding-left: 10px;
}

.viewer .tab.active, .timeline .tab.active {
    padding-left: 0;
}

.viewer .layer-tab {
    margin-left: 35px;
}

.viewer .lock {
    width: 9px;
    margin: 0 10px 0 11px;
}

.crumbs {
    height: 27px;
    padding: 3px 18px;
    border-bottom: 1px solid #000;
}

.crumbs button {
    display: block;
    width: 70px;
    height: 18px;
    padding-left: 9px;
    background-color: #1a1a1a;
    border: 1px solid #2c2c2c;
    border-radius: 2px;
    color: #2d8ceb;
    line-height: 14px;
    text-align: left;
}

.stage {
    display: flex;
    align-items: center;
    justify-content: center;
    position: relative;
    flex: 1;
    min-height: 0;
    background-color: #000;
    border-top: 1px solid #333;
}

.view-name {
    position: absolute;
    top: 10px;
    left: 10px;
    color: #ddd;
    font-size: 11px;
    font-weight: bold;
}

.canvas {
    width: 560px;
    height: 324px;
}

.viewer-bar {
    display: flex;
    align-items: center;
    height: 26px;
    padding: 3px 4px 0;
    border-top: 1px solid #232323;
}

.viewer-bar select, .boxed {
    height: 19px;
    background-color: #1c1c1c;
    border: 1px solid #303030;
    border-radius: 3px;
}

select {
    appearance: none;
    padding: 0 7px;
    background: #1b1b1b url("data:image/svg+xml,%3Csvg xmlns='http://www.w3.org/2000/svg' width='9' height='6'%3E%3Cpath d='M1 1l3.500 3.500L8 1' fill='none' stroke='%23999'/%3E%3C/svg%3E") no-repeat right 5px center;
    color: #b4b4b4;
}

.viewer-bar select {
    background-color: #1c1c1c;
    line-height: 16px;
}

.viewer-bar .w-zoom {
    width: 70px;
    padding-left: 6px;
    font-size: 12px;
}

.w-res { width: 85px; }
.w-3d { width: 88px; }
.w-cam { width: 106px; }
.w-views { width: 70px; }

.viewer-bar .sep {
    height: 14px;
    margin: 0 5px;
}

.viewer-bar .tool svg {
    width: 16px;
    height: 15px;
}

.exposure {
    padding: 0 9px 0 1px;
    color: #2d8ceb;
    font-size: 11px;
}

.boxed.time {
    width: 76px;
    margin-left: -3px;
    color: #8a8a8a;
    font-size: 10px;
}

.boxed.draft {
    display: flex;
    align-items: center;
    gap: 4px;
    width: 79px;
    padding: 0 5px;
    color: #8a8a8a;
}

.boxed.draft svg {
    width: 18px;
    height: 15px;
    color: #b0b0b0;
}

.bar-right {
    display: flex;
    align-items: center;
    margin-left: auto;
}

.bar-right .sep {
    margin: 0 4px 0 5px;
}

.bar-right .tool svg {
    width: 14px;
    height: 11px;
}

/* Timeline */
.timeline {
    position: relative;
}

.timeline .tab .swatch {
    margin-right: 12px;
}

.timeline .menu {
    margin-left: 13px;
}

.timeline .tabs {
    gap: 36px;
}

.timeline-body {
    display: grid;
    grid-template-columns: 901px minmax(0, 1fr) 19px;
    flex: 1;
    min-height: 0;
}

.outline-top {
    display: flex;
    align-items: center;
    height: 37px;
    padding-left: 11px;
    color: #a8a8a8;
}

.timecode {
    width: 111px;
    padding-top: 2px;
    color: #2d8ceb;
    white-space: nowrap;
}

.timecode strong {
    display: block;
    padding-left: 13px;
    font-size: 14px;
}

.timecode span {
    display: block;
    color: #1e5590;
    font: 10px/14px "Liberation Mono", monospace;
}

.outline-top .search {
    flex: 1;
    margin-right: 16px;
}

.outline-top button {
    width: 26px;
}

.outline-top button:nth-of-type(1) {
    width: 34px;
}

.outline-top button svg {
    width: 16px;
    height: 14px;
}

.outline-top .graph-btn {
    margin: 0 7px;
}

.layers {
    width: 100%;
    table-layout: fixed;
    border-collapse: separate;
    border-spacing: 0;
}

.l-av { width: 69px; }
.l-label { width: 32px; }
.l-num { width: 33px; }
.l-name { width: 222px; }
.l-switch { width: 138px; }
.l-mode { width: 165px; }
.l-parent { width: 164px; }

.layers th {
    height: 20px;
    padding: 0 0 0 7px;
    background-color: #343434;
    border-top: 1px solid #000;
    border-bottom: 1px solid #000;
    background-image: linear-gradient(#181818, #181818);
    background-size: 1px 12px;
    background-position: 0 3px;
    background-repeat: no-repeat;
    font-weight: normal;
    line-height: 16px;
    text-align: left;
    white-space: nowrap;
}

.layers th:first-child {
    background-image: none;
}

.layers th:nth-child(2) {
    padding-left: 13px;
}

.layers td {
    height: 20px;
    padding: 0 0 0 5px;
    background-color: #272727;
    border-bottom: 1px solid #1e1e1e;
    font-size: 11px;
    line-height: 14px;
    color: #909090;
    white-space: nowrap;
}

.layers .layer td {
    background-color: #464646;
}

.layers th.num, .layers td.num {
    padding-left: 6px;
    font: 11px/16px "Liberation Mono", monospace;
    color: #a0a0a0;
}

.cells {
    display: flex;
    align-items: center;
    gap: 2px;
    color: #b0b0b0;
}

th .cells {
    margin-left: -2px;
}

.cells > * {
    display: flex;
    flex: none;
    width: 13px;
    height: 13px;
}

.cells svg {
    width: 13px;
    height: 12px;
}

.cells .box, .mode .box {
    background-color: #333;
}

.label {
    display: flex;
    align-items: center;
    gap: 6px;
    color: #a0a0a0;
}

.label svg {
    width: 9px;
    height: 6px;
}

.label i {
    width: 15px;
    height: 15px;
    background-color: #b5383a;
}

.layers .layer-name {
    padding: 0 0 0 2px;
}

.layer-name div {
    display: flex;
    align-items: center;
    gap: 2px;
}

.layer-name i {
    width: 17px;
    height: 17px;
    background-color: #f85a14;
    border: 1px solid #000;
}

.layer-name span {
    flex: 1;
    height: 19px;
    padding: 3px 0 0 4px;
    background-color: #a0a0a0;
    color: #161616;
    font-family: "Liberation Mono", "Noto Sans CJK SC", monospace;
    font-weight: bold;
    line-height: 16px;
}

.mode-head {
    display: flex;
    color: #b4b4b4;
}

.mode-head span {
    margin-left: 11px;
    font-size: 11px;
    color: #8a8a8a;
}

.mode-head span:first-of-type {
    margin-left: 49px;
}

.layers .flush {
    padding: 0 4px 0 2px;
}

.mode, .parent {
    display: flex;
    align-items: center;
    gap: 5px;
}

.layers select {
    height: 18px;
    font-size: 12px;
    line-height: 18px;
}

.mode select {
    width: 70px;
}

.mode .box {
    width: 13px;
    height: 13px;
}

.parent svg {
    margin-left: 3px;
}

.parent select {
    flex: 1;
}

.layers .value {
    padding-top: 2px;
    font: 10px/14px "Liberation Mono", "Noto Sans CJK SC", monospace;
    color: #2d8ceb;
}

.layer .value {
    padding-left: 9px;
}

.value b {
    color: #909090;
    font-family: "Open Sans", sans-serif;
    font-weight: normal;
}

.value a {
    color: #2d8ceb;
    font-size: 11px;
    text-decoration: none;
}

.layers .whip {
    padding-bottom: 3px;
}

.whip svg {
    margin-left: 13px;
}

.prop {
    display: flex;
    align-items: center;
    padding-left: 109px;
}

.prop i {
    width: 16px;
    color: #444;
}

.prop svg {
    height: 14px;
    margin-right: 8px;
    color: #a8a8a8;
}

.group {
    display: flex;
    align-items: center;
    gap: 14px;
    padding-left: 89px;
}

.group.disabled {
    color: #4a4a4a;
}

.group svg {
    width: 6px;
    height: 8px;
    color: #909090;
}

/* Time graph */
.graph {
    display: flex;
    flex-direction: column;
    min-width: 0;
    padding-top: 6px;
    border-left: 1px solid #000;
}

.navigator, .workarea {
    flex: none;
    height: 11px;
    border: 1px solid #000;
    border-width: 1px 0;
    background-color: #2d8ceb;
    border-radius: 6px 6px 0 0;
    padding: 0 6px;
}

.navigator i, .workarea i {
    display: block;
    height: 100%;
    background-color: #666;
}

.ruler {
    display: grid;
    grid-template-columns: repeat(10, minmax(0, 1fr)) 6px;
    height: 20px;
    padding-left: 6px;
    border-bottom: 1px solid #000;
    font: 10px/14px "Liberation Mono", monospace;
    color: #909090;
}

.ruler span {
    position: relative;
    text-indent: -9px;
    white-space: nowrap;
}

.ruler span:first-child {
    text-indent: -6px;
}

.ruler .end {
    text-indent: -10px;
}

.ruler span::after {
    content: "";
    position: absolute;
    left: 0;
    bottom: 0;
    width: 1px;
    height: 5px;
    background-color: #aaa;
}

.workarea {
    height: 16px;
    border-top: none;
    border-radius: 4px 4px 0 0;
}

.workarea i {
    background-color: #5f5f5f;
}

.cached {
    flex: none;
    height: 4px;
    padding: 0 6px;
    border-bottom: 1px solid #000;
    background: #1ac31a content-box;
}

.tracks {
    position: relative;
    flex: 1;
    margin: 0 6px;
    background-color: #323232;
}

.track {
    height: 20px;
    border-bottom: 1px solid #1e1e1e;
}

.layer-track {
    margin: 0 -6px;
    padding: 2px 6px 0;
    background-color: #464646;
}

.bar {
    height: 16px;
    background: linear-gradient(#ad4c4c, #984040);
    border: 1px solid #d9a09c;
    border-width: 1px 0 0 1px;
}

.playhead {
    position: absolute;
    top: -36px;
    bottom: 0;
    left: 13.6%;
    width: 1px;
    background-color: #2d8ceb;
}

.playhead svg {
    position: absolute;
    top: 0;
    left: -6px;
    width: 12px;
    height: 14px;
}

.playhead i {
    display: block;
    width: 7px;
    height: 11px;
    margin: 0 0 9px -3px;
    border: 1px solid #aaa;
    border-width: 1px 0;
    background: linear-gradient(90deg, transparent 2px, #aaa 2px 3px, #2d8ceb 3px 4px, #aaa 4px 5px, transparent 5px);
}

.playhead svg + i {
    margin-top: 59px;
}

.gutter {
    padding: 39px 0 0 4px;
}

.gutter svg {
    width: 12px;
    height: 14px;
    margin-bottom: 6px;
}

.gutter svg + svg {
    width: 14px;
    height: 12px;
    margin-left: -2px;
}

.timeline-footer {
    display: grid;
    grid-template-columns: 901px 1fr;
    height: 19px;
    padding-bottom: 2px;
    background: linear-gradient(#000, #000) no-repeat 0 0 / 1008px 1px;
}

.status, .zoom {
    display: flex;
    align-items: center;
    gap: 4px;
    padding-left: 5px;
}

.switch {
    width: 15px;
    height: 15px;
    padding: 1px;
    border: 1px solid #333;
    color: #2d8ceb;
}

.switch svg {
    width: 11px;
    height: 11px;
}

.snail {
    width: 14px;
    margin: 0 6px 0 1px;
    color: #b0b0b0;
}

.ms {
    margin-left: 5px;
    color: #8dc891;
}

.zoom {
    gap: 11px;
    color: #b0b0b0;
}

.zoom svg {
    width: 16px;
    height: 8px;
}

.zoom .small {
    width: 10px;
    height: 5px;
}

.zoom input {
    appearance: none;
    width: 48px;
    height: 3px;
    background-color: #3c3c3c;
}

.zoom input::-webkit-slider-thumb {
    appearance: none;
    width: 10px;
    height: 10px;
    border: 2px solid #8a8a8a;
    border-radius: 50%;
    background-color: #232323;
}

/* Tutorial mark-up over the timeline */
.arrow {
    position: absolute;
    top: 88px;
    left: 479px;
    width: 270px;
    height: 112px;
}

.note {
    position: absolute;
    top: 218px;
    left: 800px;
    color: #ff1e10;
    font: 28px/40px "Noto Sans CJK SC", sans-serif;
    white-space: nowrap;
}

.drag-handle {
    position: absolute;
    bottom: 0;
    left: 460px;
    width: 48px;
    height: 2px;
    background-color: #4e4e4e;
}

/* Info */
.readout {
    display: flex;
    align-items: center;
    height: 67px;
    margin: 0 10px 0 6px;
    padding-left: 2px;
    border-bottom: 2px solid #303030;
    font-size: 10px;
    color: #8a8a8a;
}

.chip {
    width: 20px;
    height: 20px;
    margin: 0 6px 8px 0;
    background-color: #000;
}

.readout dl {
    display: grid;
    grid-template-columns: 18px 1fr;
    width: 69px;
    height: 54px;
    line-height: 13px;
    border-right: 2px solid #303030;
}

.readout svg {
    width: 9px;
    height: 9px;
    margin: 4px 4px 0 9px;
}

.readout .xy {
    align-content: start;
    border: none;
}

.transport {
    display: flex;
    gap: 11px;
    padding: 10px 0 0 47px;
    color: #b0b0b0;
}

.transport svg {
    width: 13px;
    height: 10px;
}

/* Effects & presets */
.overflow {
    margin: 3px 3px 3px auto;
    padding-left: 25px;
    border-left: 1px solid #2e2e2e;
    color: #b0b0b0;
}

.effects .search {
    margin: 4px 6px 2px;
}

.effects-body {
    display: flex;
    flex: 1;
    min-height: 0;
    border-top: 1px solid #000;
    overflow: hidden;
}

.effects ul {
    flex: 1;
    list-style: none;
}

.effects li {
    display: flex;
    align-items: center;
    height: 17px;
    padding: 1px 0 0 6px;
    background-color: #272727;
    border-bottom: 1px solid #1e1e1e;
    font-size: 11px;
    color: #989898;
}

.effects li.latin {
    padding-top: 2px;
    font: 10px/14px "Liberation Mono", monospace;
}

.effects li svg {
    width: 6px;
    height: 8px;
    margin-right: 4px;
}

.vscroll {
    width: 17px;
    padding: 1px;
    background-color: #1c1c1c;
}

.vscroll i {
    display: block;
    width: 15px;
    height: 76%;
    border-radius: 8px;
    background-color: #343434;
}

.effects-footer {
    display: flex;
    justify-content: flex-end;
    align-items: center;
    height: 18px;
    margin-right: 17px;
    padding-right: 7px;
    border-top: 1px solid #000;
    border-right: 1px solid #000;
    color: #b0b0b0;
}

/* Paragraph */
.aligns {
    display: flex;
    gap: 3px;
    margin: 5px 18px 0 6px;
    height: 29px;
    border-bottom: 2px solid #303030;
}

.aligns .tool {
    height: 23px;
}

.aligns .tool svg, .direction svg {
    width: 16px;
    height: 14px;
}

.aligns .gap {
    margin-left: 5px;
}

.indents {
    display: grid;
    grid-template-columns: 72px 66px 1fr;
    row-gap: 1px;
    padding-left: 6px;
    color: #8a8a8a;
}

.indents label {
    display: flex;
    align-items: center;
    height: 18px;
    white-space: nowrap;
}

.indents label svg {
    width: 16px;
    height: 15px;
    margin-right: 5px;
    color: #b0b0b0;
}

.indents input {
    width: 11px;
    color: #2d8ceb;
    font-size: 11px;
}

.direction {
    display: flex;
    gap: 3px;
}
```
